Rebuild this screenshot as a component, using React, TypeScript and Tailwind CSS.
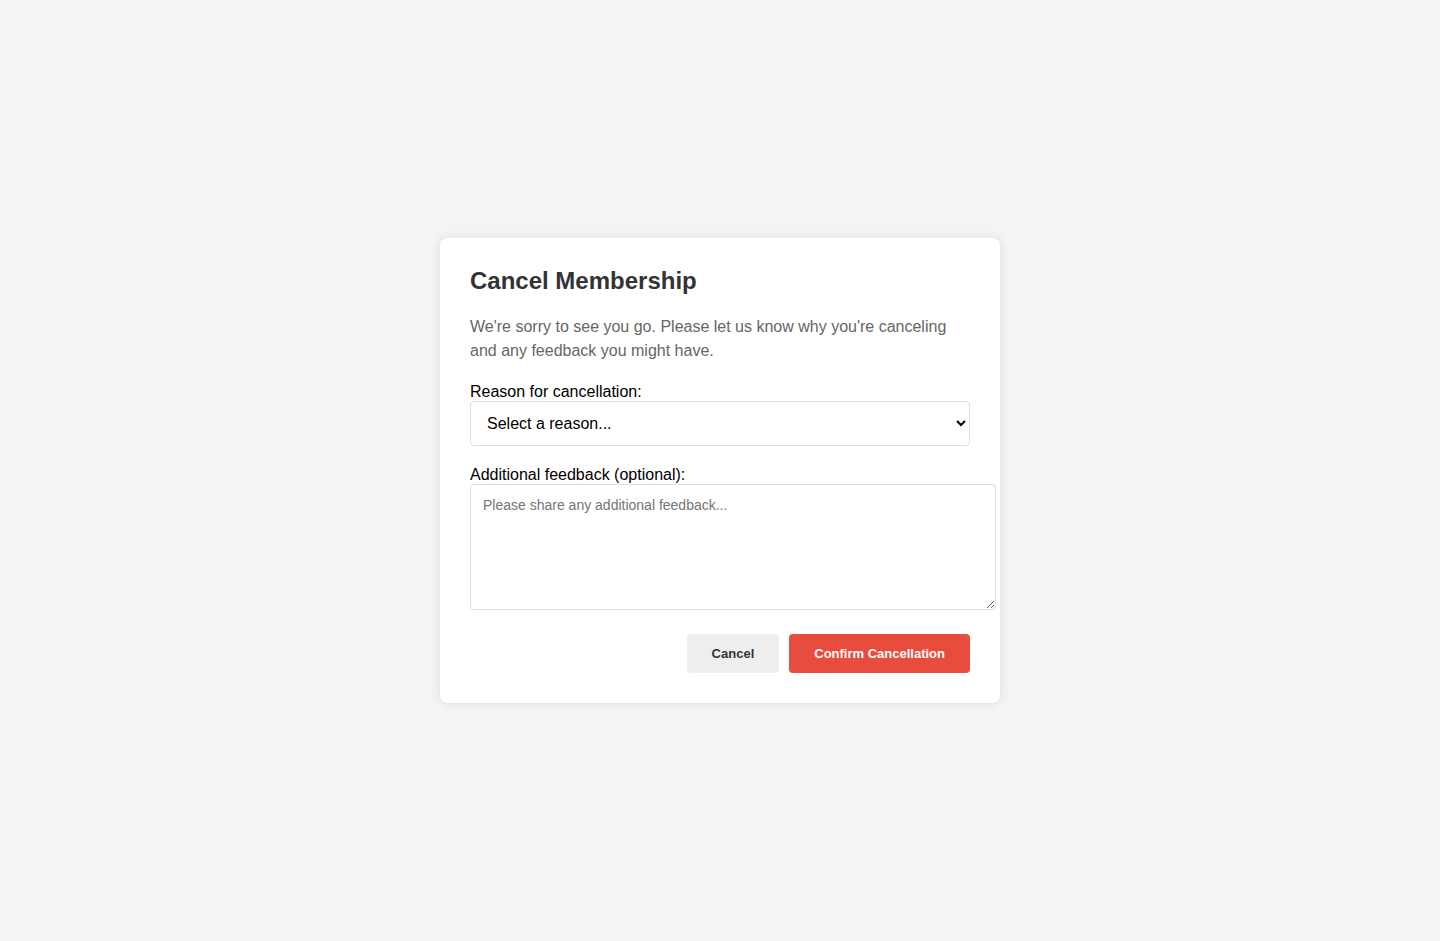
import { useState } from 'react';

export default function App() {
  const [reason, setReason] = useState('');
  const [feedback, setFeedback] = useState('');

  return (
    <div className="min-h-screen bg-[#f4f4f4] flex items-center justify-center font-['Liberation_Sans',Arial,sans-serif]">
      <div className="w-[560px] bg-white rounded-lg px-[30px] pt-[29px] pb-[30px] shadow-[0_0_10px_rgba(0,0,0,0.1)]">
        <h2 className="text-2xl font-bold text-[#333] leading-[normal] mb-5">Cancel Membership</h2>
        <p className="text-base leading-6 text-[#666] mb-5">
          We're sorry to see you go. Please let us know why you're canceling and any feedback you might have.
        </p>

        <label htmlFor="reason" className="block text-base leading-[normal] text-black">
          Reason for cancellation:
        </label>
        <select
          id="reason"
          value={reason}
          onChange={(e) => setReason(e.target.value)}
          className="block w-full h-[45px] px-3 text-base text-black bg-white border border-[#ddd] rounded mb-5 appearance-auto"
        >
          <option value="">Select a reason...</option>
          <option value="price">Too expensive</option>
          <option value="usage">Not using it enough</option>
          <option value="other">Other</option>
        </select>

        <label htmlFor="feedback" className="block text-base leading-[normal] text-black">
          Additional feedback (optional):
        </label>
        <textarea
          id="feedback"
          value={feedback}
          onChange={(e) => setFeedback(e.target.value)}
          placeholder="Please share any additional feedback..."
          className="block box-content w-full h-[100px] px-3 pt-[10px] pb-[14px] text-sm text-black border border-[#ddd] rounded placeholder:text-[#757575] resize-y"
        />

        <div className="flex justify-end gap-2.5 mt-6">
          <button className="px-[25px] py-3 rounded bg-[#eee] text-[#333] text-[13px] leading-[15px] font-bold">
            Cancel
          </button>
          <button className="px-[25px] py-3 rounded bg-[#e74c3c] text-white text-[13px] leading-[15px] font-bold">
            Confirm Cancellation
          </button>
        </div>
      </div>
    </div>
  );
}
